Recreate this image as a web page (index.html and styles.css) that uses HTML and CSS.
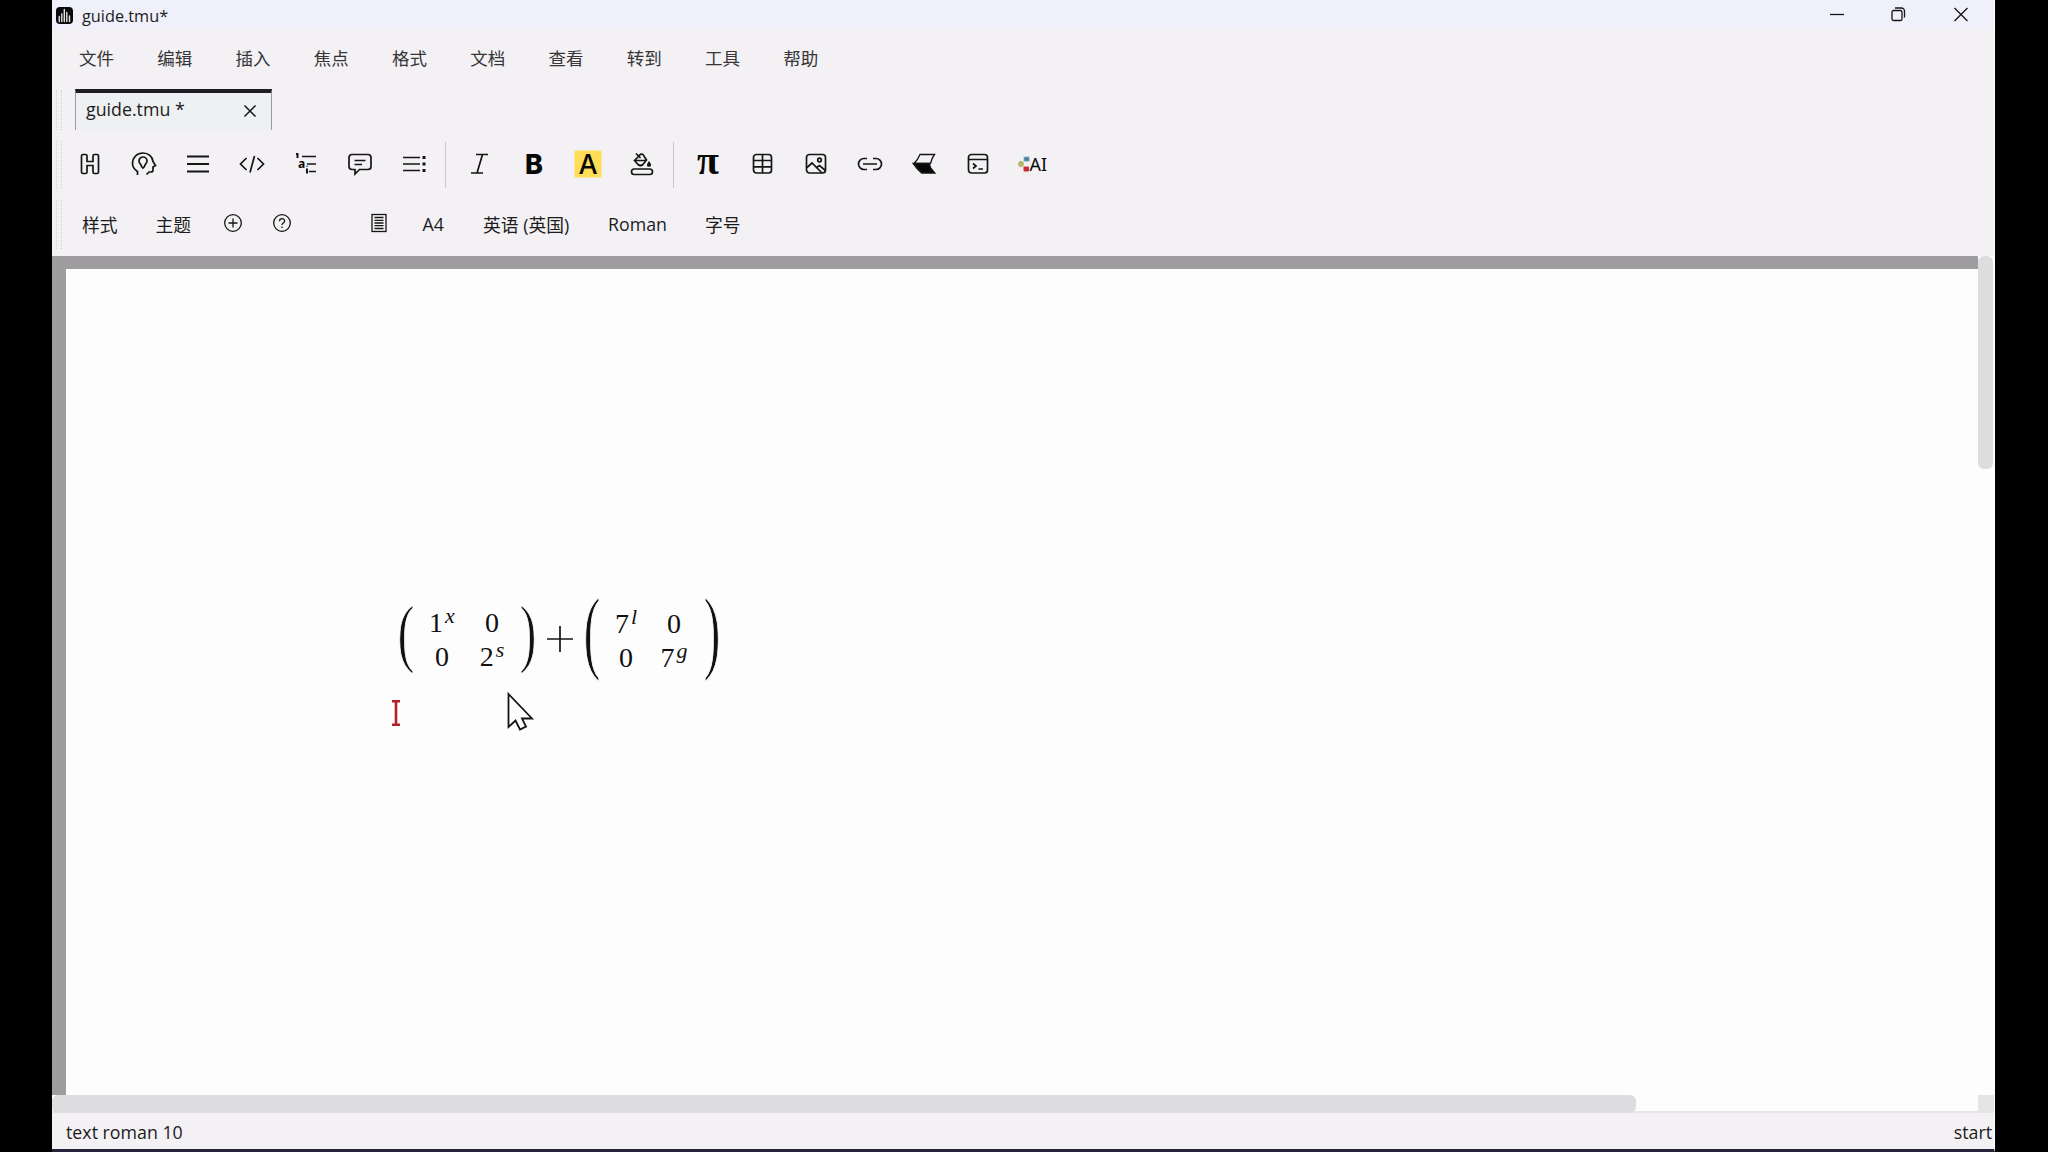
FILE: index.html
```html
<!DOCTYPE html>
<html lang="zh-CN">
<head>
<meta charset="utf-8">
<title>guide.tmu*</title>
<link rel="stylesheet" href="styles.css">
</head>
<body>
<div class="window">
  <header class="titlebar">
    <svg class="logo" viewBox="0 0 17 17"><rect width="17" height="17" rx="4" fill="#0b0b0b" stroke="none"/><path d="M3.3 9.5v5M5.8 7v7.5M8.3 2.5v12M10.8 5.5v9M13.5 9v5.500" stroke="#e4e4e4" stroke-width="1.4" stroke-linecap="round"/></svg>
    <span class="title">guide.tmu*</span>
    <div class="controls">
      <svg viewBox="0 0 20 20"><path d="M3 9.500h14"/></svg>
      <svg viewBox="0 0 20 20"><rect x="3" y="5.500" width="10" height="10" rx="1.600"/><path d="M6 3h6.500a3 3 0 0 1 3 3v6.500"/></svg>
      <svg viewBox="0 0 20 20"><path d="M3.500 3l13 13M16.500 3l-13 13"/></svg>
    </div>
  </header>
  <nav class="menubar">
    <span>文件</span><span>编辑</span><span>插入</span><span>焦点</span><span>格式</span><span>文档</span><span>查看</span><span>转到</span><span>工具</span><span>帮助</span>
  </nav>
  <div class="tabs">
    <i class="grip"></i>
    <div class="tab"><span>guide.tmu *</span><svg viewBox="0 0 14 14"><path d="M1.500 1.500l11 11M12.500 1.500l-11 11"/></svg></div>
  </div>
  <div class="toolbar icons">
    <i class="grip"></i>
    <div class="group">
      <svg viewBox="0 0 28 28"><path d="M7 4.500h2.500q1.500 0 1.500 1.500v5.500h6V6q0-1.500 1.500-1.500H21q1.500 0 1.500 1.500v16q0 1.500-1.500 1.500h-2.500q-1.500 0-1.500-1.500v-6.500h-6V22q0 1.500-1.500 1.500H7q-1.500 0-1.500-1.500V6q0-1.500 1.500-1.500z"/></svg>
      <svg viewBox="0 0 28 28"><path d="M7.500 25v-3.500C4.500 19.500 2.500 17 2.500 13.500 2.500 7.500 7 3 13 3c5.500 0 9.500 3.500 10 8.500l2.500 4-2.500 1.500v3q0 2-2 2h-2l-2.500 2.500"/><path d="M11.500 16.500c0-2-2.500-3-2.500-5.500a4 4 0 0 1 8 0c0 2.500-2.500 3.500-2.500 5.500l-1.500 1.500z"/></svg>
      <svg viewBox="0 0 28 28"><path class="bold" d="M3 6.500h22M3 14h22M3 21.500h22"/></svg>
      <svg viewBox="0 0 28 28"><path d="M8.500 8L2.500 14l6 6M19.500 8l6 6-6 6M16.500 6l-4.500 16.500"/></svg>
      <svg viewBox="0 0 28 28"><path d="M10 6.500H24M15 14H24M17 21.500H24"/><path class="bold" d="M4 4h1.500v4M15 18.500v5M15 15.800v.8"/><text class="tiny" x="9.500" y="18">a</text></svg>
      <svg viewBox="0 0 28 28"><path d="M6 4.500h16q3 0 3 3v9q0 3-3 3h-8.500L9 24v-4.500H6q-3 0-3-3v-9q0-3 3-3zM8.500 10.500h11M8.500 14.500h7.500"/></svg>
      <svg viewBox="0 0 28 28"><path d="M3 7.500h17M3 14h17M3 20.500h17"/><path d="M22.500 6h3v3h-3zM22.500 12.500h3v3h-3zM22.500 19h3v3h-3z" fill="#151515" stroke="none"/></svg>
    </div>
    <b class="sep"></b>
    <div class="group">
      <svg viewBox="0 0 28 28"><path d="M10 4.500h12M5 23h12M16.500 4.500L11 23"/></svg>
      <svg viewBox="0 0 28 28"><text class="bee" x="14" y="24">B</text></svg>
      <svg viewBox="0 0 28 28"><rect x=".5" y=".5" width="27" height="27" rx="1.500" fill="#ffdd57" stroke="none"/><text class="aye" x="14" y="24">A</text></svg>
      <svg viewBox="0 0 28 28"><rect x="3.500" y="19" width="21" height="5.500" rx="2.750"/><path d="M10.500 6.500L6.500 10.500 10 14.500q2.500 2 5 0l3.500-4.500-3.500-5.500q-2-1.500-4 1.500M6.500 10.500h12M8 3.500l4.500 4.500"/><path d="M21 12.500q2.500 3.500 0 3.500t0-3.500z" fill="#151515"/></svg>
    </div>
    <b class="sep"></b>
    <div class="group last">
      <svg viewBox="0 0 28 28"><text class="pi" x="13" y="23.500">π</text></svg>
      <svg viewBox="0 0 28 28"><rect x="4.500" y="4.500" width="18" height="18.500" rx="3"/><path d="M4.500 10.500h18M4.500 16.800h18M13.500 4.500V23"/></svg>
      <svg viewBox="0 0 28 28"><rect x="3.500" y="4.500" width="19" height="18.500" rx="3"/><circle cx="16.500" cy="10" r="1.800"/><path d="M4 17.500l5-4.500L19 23M13.500 17.500l3-2 6 5"/></svg>
      <svg viewBox="0 0 28 28"><path d="M11 8.500H8a5.500 5.500 0 0 0 0 11h3M17 8.500h3a5.500 5.500 0 0 1 0 11h-3M7 14h14"/></svg>
      <svg viewBox="0 0 28 28"><path class="fine" d="M10 4.500h14.500q-3 4-4 9H4q4-4 6-9z"/><path d="M3.500 13.500H19l1.500 4.500 4 5H12q-5-4-8.500-9.500z" fill="#070707"/></svg>
      <svg viewBox="0 0 28 28"><rect x="4.500" y="4.500" width="19" height="18.500" rx="3"/><path d="M4.500 9.500h19M9 13.500l3 2.500-3 2.500M14.500 19h4.500"/></svg>
      <svg viewBox="0 0 28 28"><circle cx="3" cy="14" r="2.900" fill="#b7b765" stroke="none"/><rect x="5.800" y="6.800" width="5.500" height="4.500" fill="#5b7897" stroke="#9de3ee" stroke-width=".8"/><rect x="5.500" y="16.500" width="5.500" height="5" rx="1" fill="#c62f32" stroke="none"/><text class="ai" x="11.500" y="21">AI</text></svg>
    </div>
  </div>
  <div class="toolbar context">
    <i class="grip"></i>
    <span>样式</span>
    <span>主题</span>
    <svg viewBox="0 0 20 20"><circle cx="10" cy="10" r="8.300"/><path d="M10 5.500v9M5.500 10h9"/></svg>
    <svg viewBox="0 0 20 20"><circle cx="10" cy="10" r="8.300"/><path d="M7.500 8.200C7.500 4.600 12.600 4.800 12.600 7.900c0 2-2.600 2-2.600 4M10 13.600v1.500"/></svg>
    <svg viewBox="0 0 20 20"><rect x="3" y="1.500" width="14" height="17"/><path d="M5.500 4.500h9M5.500 7.300h9M5.500 10h9M5.500 12.700h9M5.500 15.500h9"/></svg>
    <span>A4</span>
    <span>英语 (英国)</span>
    <span>Roman</span>
    <span>字号</span>
  </div>
  <main class="workspace">
    <section class="canvas">
      <article class="page">
        <div class="formula">
          <span class="paren small">(</span>
          <div class="matrix first"><span>1<sup>x</sup></span><span>0</span><span>0</span><span>2<sup>s</sup></span></div>
          <span class="paren small">)</span>
          <svg class="plus" viewBox="0 0 26 26"><path d="M0 13h26M13 0v26"/></svg>
          <span class="paren big">(</span>
          <div class="matrix second"><span>7<sup>l</sup></span><span>0</span><span>0</span><span>7<sup>g</sup></span></div>
          <span class="paren big">)</span>
        </div>
        <svg class="caret" viewBox="0 0 8 26"><path d="M0 1.200h8M0 24.800h8M4 1v24"/></svg>
      </article>
    </section>
    <div class="vscroll"><i></i></div>
    <div class="hscroll"><i></i></div>
    <div class="corner"></div>
  </main>
  <footer class="status"><span>text roman 10</span><span>start</span></footer>
</div>
<svg class="pointer" viewBox="0 0 28 40"><path d="M1.500 2v33l7-6.500 4.500 9 6-3-4-8h10z"/></svg>
</body>
</html>
```
FILE: styles.css
```css
* { box-sizing: border-box; }

body {
  margin: 0;
  height: 1152px;
  padding: 0 53px 0 52px;
  background: #000;
  overflow: hidden;
  color: #1c1c1c;
  font-family: "Open Sans", "Noto Sans CJK SC", sans-serif;
}

.window {
  display: flex;
  flex-direction: column;
  height: 1152px;
  background: #f3f1f4;
  border-bottom: 3px solid #25243a;
  border-right: 1px solid #fff;
}
.window > * { flex: none; }

svg { display: block; fill: none; stroke: #151515; stroke-width: 1.7; }

.titlebar { display: flex; align-items: center; height: 30px; padding: 0 23px 0 4px; background: #f0f0fa; }
.logo { width: 17px; height: 17px; }
.title { margin-left: 9px; padding-top: 2px; font-size: 16.300px; }
.controls { display: flex; gap: 42px; margin-left: auto; }
.controls svg { width: 20px; height: 20px; stroke-width: 1.300; }

.menubar {
  display: flex;
  align-items: center;
  height: 59px;
  padding: 0 0 4px 27px;
  color: #363537;
  font: 17.500px "Noto Sans CJK SC", sans-serif;
}
.menubar span { width: 78.250px; }

.grip {
  width: 6px;
  border: dotted #d6d3d8;
  border-width: 0 1px;
}

.tabs { display: flex; height: 46px; padding-left: 4px; }
.tabs .grip { height: 40px; margin-top: 1px; }
.tab {
  display: flex;
  align-items: center;
  justify-content: space-between;
  width: 197px;
  height: 41px;
  margin-left: 13px;
  padding: 0 14px 6px 10px;
  background: #eef0f2;
  border: 1px solid #9b9a9e;
  border-top: 4px solid #1e1f20;
  border-bottom: 0;
  font-size: 17.800px;
}
.tab svg { width: 14px; height: 14px; margin-top: 4px; stroke-width: 1.500; }

.toolbar { display: flex; align-items: center; padding-left: 4px; }
.toolbar .grip { height: 49px; }
.icons { height: 59px; }
.group { display: flex; padding-bottom: 2px; }
.icons .grip { margin-right: 1px; }
.group svg { width: 28px; height: 28px; margin: 0 12.970px; overflow: visible; }
.last { margin-left: 1px; }
.bold { stroke-width: 2; }
.fine { stroke-width: 1.300; }
.sep { width: 1px; height: 46px; margin: 0 6.700px 0 4.500px; background: #c9c7cb; }
.icons text { stroke: none; fill: #080808; text-anchor: middle; }
.icons .tiny { font: 700 12px "Open Sans", sans-serif; }
.icons .bee { font: 800 27px Inter, sans-serif; }
.icons .aye { font: 500 27px Inter, sans-serif; }
.icons .pi { font: 700 40px "Liberation Serif", serif; }
.icons .ai { font: 18px "Noto Sans", sans-serif; text-anchor: start; }

.context {
  display: grid;
  grid-template-columns: 26px 73.500px 67px 49px 97px 54px 60.500px 125px 97px auto;
  justify-content: start;
  height: 62px;
  padding-bottom: 2px;
  font: 17.800px "Open Sans", "Noto Sans CJK SC", sans-serif;
}
.context svg { width: 20px; height: 20px; stroke-width: 1.300; margin-top: -2px; }
.context span { white-space: nowrap; }

.workspace {
  display: grid;
  grid-template-columns: 1fr 16px;
  grid-template-rows: 839px 18px;
  background: #fefdfe;
}
.canvas { padding: 13px 0 0 14px; background: #9f9da0; }
.page { height: 826px; padding: 323px 0 0 326px; background: #fefdfe; }
.vscroll i { display: block; width: 15px; height: 213px; border-radius: 6px; background: #dddcdf; }
.hscroll { box-shadow: inset 0 -2px #e7e5e8; }
.hscroll i { display: block; width: 1584px; height: 18px; border-radius: 6px; background: #dddcdf; }
.corner { background: #e6e4e7; }

.status {
  display: flex;
  justify-content: space-between;
  align-items: center;
  height: 36px;
  padding: 1px 2px 0 14px;
  font-size: 17.800px;
}

.formula {
  display: flex;
  align-items: center;
  height: 96px;
  color: #111;
  font: 28px/34px "Liberation Serif", serif;
}
.paren { flex: none; width: 28px; text-align: center; font-size: 51px; -webkit-text-stroke: .7px #fefdfe; }
.small { transform: translateY(-8px) scaleY(1.500); }
.big { transform: translateY(-9px) scaleY(1.840); }
.matrix { display: grid; grid-template-columns: 50px 50px; justify-items: center; }
.matrix span { white-space: nowrap; height: 34px; }
.matrix sup {
  position: relative;
  top: -9px;
  margin-left: 2px;
  font-size: 22px;
  font-style: italic;
  line-height: 0;
  vertical-align: baseline;
}
.first { margin: 0 -3px; }
.second { grid-template-columns: 48px 48px; margin: 2px 0 0 -4px; }
.plus { width: 26px; height: 26px; margin: 0 5px 3px; }
.caret { width: 8px; height: 26px; margin-top: 12px; stroke: #b32025; stroke-width: 2.600; }

.pointer {
  position: absolute;
  left: 507px;
  top: 692px;
  width: 28px;
  height: 40px;
  fill: #fff;
  stroke-width: 1.800;
}
```
